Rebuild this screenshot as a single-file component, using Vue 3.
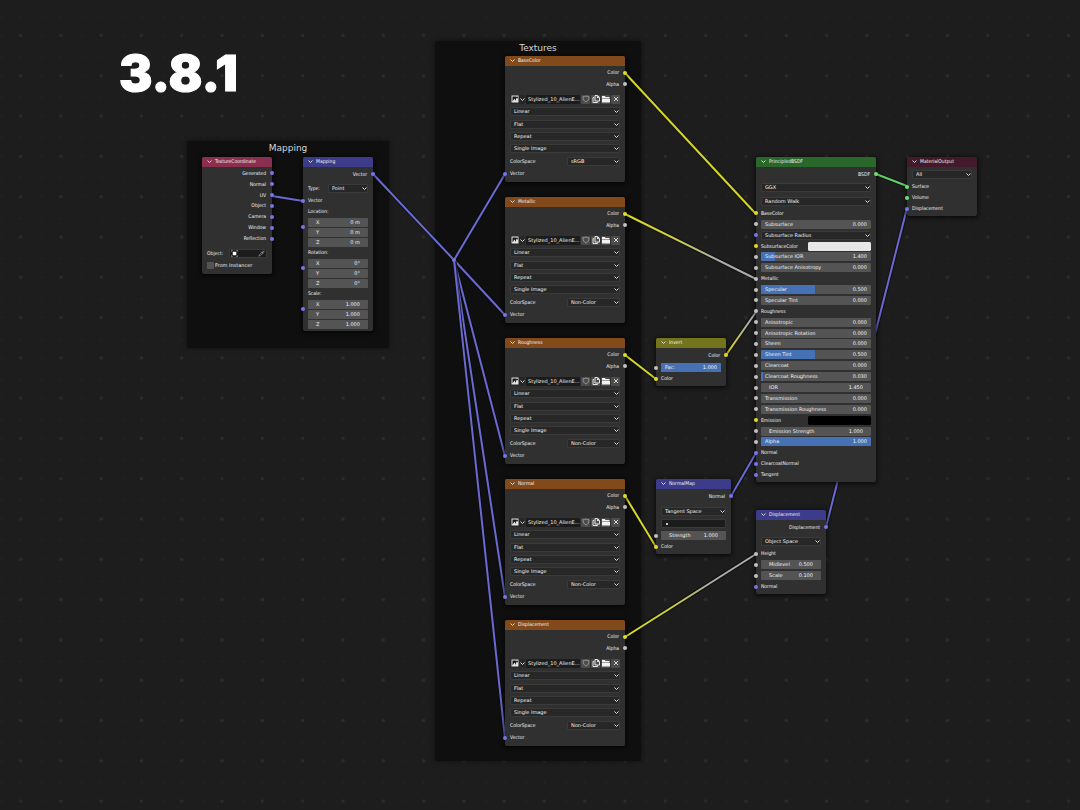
<script setup>
const V = 'vector'
const F = 'float'
const C = 'color'
const S = 'shader'

const out = (label, socket) => ({ type: 'out', label, socket })
const inp = (label, socket) => ({ type: 'in', label, socket })
const num = (label, value, fill = 0, inset = false) => ({ type: 'num', label, value, fill, inset, socket: F })
const sel = (value, label = '', socket = '') => ({ type: 'select', value, label, socket })
const xyz = (label, value) => ({ type: 'xyz', label, value, socket: V })

const textureNode = (title, y, space) => ({
  id: 'tex-' + title, title, tone: 'orange', x: 505, y, w: 120,
  groups: [
    { h: 24, top: true, rows: [out('Color', C), out('Alpha', F)] },
    {
      h: 90, lead: true, rows: [
        { type: 'image', value: 'Stylized_10_AlienE...' },
        sel('Linear'), sel('Flat'), sel('Repeat'), sel('Single Image'),
        sel(space, 'ColorSpace'), inp('Vector', V),
      ],
    },
  ],
})

const frames = [
  { title: 'Mapping', x: 187, y: 141, w: 202, h: 207 },
  { title: 'Textures', x: 435, y: 41, w: 206, h: 720 },
]

const nodes = [
  {
    id: 'coord', title: 'TextureCoordinate', tone: 'red', x: 202, y: 157, w: 70,
    groups: [
      { h: 77, top: true, rows: ['Generated', 'Normal', 'UV', 'Object', 'Camera', 'Window', 'Reflection'].map((l) => out(l, V)) },
      { h: 28, lead: true, rows: [{ type: 'object', label: 'Object:' }, { type: 'check', label: 'From Instancer' }] },
    ],
  },
  {
    id: 'mapping', title: 'Mapping', tone: 'purple', x: 303, y: 157, w: 70,
    groups: [
      { h: 28, rows: [out('Vector', V), { ...sel('Point', 'Type:'), half: true }] },
      { h: 11, rows: [inp('Vector', V)] },
      { h: 41, rows: [xyz('Location:', '0 m')] },
      { h: 41, rows: [xyz('Rotation:', '0°')] },
      { h: 41, rows: [xyz('Scale:', '1.000')] },
    ],
  },
  textureNode('BaseColor', 56, 'sRGB'),
  textureNode('Metallic', 197, 'Non-Color'),
  textureNode('Roughness', 338, 'Non-Color'),
  textureNode('Normal', 479, 'Non-Color'),
  textureNode('Displacement', 620, 'Non-Color'),
  {
    id: 'invert', title: 'Invert', tone: 'olive', x: 656, y: 338, w: 70,
    groups: [
      { h: 14, rows: [out('Color', C)] },
      { h: 22, rows: [num('Fac:', '1.000', 100), inp('Color', C)] },
    ],
  },
  {
    id: 'normalmap', title: 'NormalMap', tone: 'purple', x: 656, y: 479, w: 75,
    groups: [
      { h: 14, rows: [out('Normal', V)] },
      { h: 27, uv: true, rows: [sel('Tangent Space'), { type: 'uvmap', label: 'UV Map' }] },
      { h: 22, rows: [num('Strength', '1.000', 0, true), inp('Color', C)] },
    ],
  },
  {
    id: 'bsdf', title: 'PrincipledBSDF', tone: 'green', x: 756, y: 157, w: 120,
    groups: [
      { h: 14, rows: [out('BSDF', S)] },
      { h: 27, rows: [sel('GGX'), sel('Random Walk')] },
      {
        h: 272, rows: [
          inp('BaseColor', C),
          num('Subsurface', '0.000'),
          sel('Subsurface Radius', '', V),
          { type: 'swatch', label: 'SubsurfaceColor', value: '#e7e7e7', socket: C },
          num('Subsurface IOR', '1.400', 13),
          num('Subsurface Anisotropy', '0.000'),
          inp('Metallic', F),
          num('Specular', '0.500', 49),
          num('Specular Tint', '0.000'),
          inp('Roughness', F),
          num('Anisotropic', '0.000'),
          num('Anisotropic Rotation', '0.000'),
          num('Sheen', '0.000'),
          num('Sheen Tint', '0.500', 49),
          num('Clearcoat', '0.000'),
          num('Clearcoat Roughness', '0.030', 2),
          num('IOR', '1.450', 0, true),
          num('Transmission', '0.000'),
          num('Transmission Roughness', '0.000'),
          { type: 'swatch', label: 'Emission', value: '#000000', socket: C },
          num('Emission Strength', '1.000', 0, true),
          num('Alpha', '1.000', 100),
          inp('Normal', V),
          inp('ClearcoatNormal', V),
          inp('Tangent', V),
        ],
      },
    ],
  },
  {
    id: 'output', title: 'MaterialOutput', tone: 'wine', x: 907, y: 157, w: 70,
    groups: [
      { h: 14, rows: [sel('All')] },
      { h: 33, rows: [inp('Surface', S), inp('Volume', S), inp('Displacement', V)] },
    ],
  },
  {
    id: 'displace', title: 'Displacement', tone: 'purple', x: 756, y: 510, w: 70,
    groups: [
      { h: 28, rows: [out('Displacement', V), sel('Object Space')] },
      { h: 44, rows: [inp('Height', F), num('Midlevel', '0.500', 0, true), num('Scale', '0.100', 0, true), inp('Normal', V)] },
    ],
  },
]

const violet = '#6a6ad2'
const wires = [
  [272, 196, 303, 201, violet],
  [373, 174, 454, 260, violet],
  [454, 260, 505, 174, violet],
  [454, 260, 505, 315, violet],
  [454, 260, 505, 456, violet],
  [454, 260, 505, 597, violet],
  [454, 260, 505, 738, violet],
  [625, 73, 756, 214, '#d6d62a'],
  [625, 214, 756, 279, 'url(#fade-down)'],
  [625, 355, 656, 379, '#d6d62a'],
  [726, 355, 756, 312, 'url(#fade-up)'],
  [625, 496, 656, 547, '#d6d62a'],
  [731, 496, 756, 453, violet],
  [625, 637, 756, 554, 'url(#fade-rise)'],
  [826, 527, 907, 208, violet],
  [876, 174, 907, 186, '#62cf68'],
]
</script>

<template>
  <main class="canvas">
    <svg class="layer" aria-hidden="true">
      <defs>
        <pattern id="grid" width="403" height="403" patternUnits="userSpaceOnUse" patternTransform="translate(.5 15.3) scale(.1)">
          <circle cx="201" cy="201" r="17" fill="#2b2b2b" />
          <circle cx="16" cy="201" r="13" fill="#212121" />
          <circle cx="201" cy="16" r="13" fill="#212121" />
          <circle cx="16" cy="16" r="13" fill="#212121" />
        </pattern>
      </defs>
      <rect width="100%" height="100%" fill="url(#grid)" />
    </svg>

    <h1 class="version">3.8.1</h1>

    <section
      v-for="f in frames" :key="f.title" class="frame"
      :style="{ left: f.x + 'px', top: f.y + 'px', width: f.w + 'px', height: f.h + 'px' }"
    >
      <h2>{{ f.title }}</h2>
    </section>

    <svg class="layer" aria-hidden="true">
      <defs>
        <linearGradient id="fade-down" gradientUnits="userSpaceOnUse" x1="625" y1="214" x2="756" y2="279">
          <stop offset="0" stop-color="#dcdc20" /><stop offset=".35" stop-color="#cfcf3a" /><stop offset=".7" stop-color="#adadad" /><stop offset="1" stop-color="#adadad" />
        </linearGradient>
        <linearGradient id="fade-up" gradientUnits="userSpaceOnUse" x1="726" y1="355" x2="756" y2="312">
          <stop offset="0" stop-color="#dcdc20" /><stop offset=".25" stop-color="#cfcf3a" /><stop offset=".7" stop-color="#adadad" /><stop offset="1" stop-color="#adadad" />
        </linearGradient>
        <linearGradient id="fade-rise" gradientUnits="userSpaceOnUse" x1="625" y1="637" x2="756" y2="554">
          <stop offset="0" stop-color="#dcdc20" /><stop offset=".35" stop-color="#cfcf3a" /><stop offset=".65" stop-color="#adadad" /><stop offset="1" stop-color="#adadad" />
        </linearGradient>
      </defs>
      <g v-for="(w, i) in wires" :key="i" fill="none">
        <path :d="`M${w[0]} ${w[1]}L${w[2]} ${w[3]}`" stroke="#0c0c0c" stroke-opacity=".7" stroke-width="4" />
        <path :d="`M${w[0]} ${w[1]}L${w[2]} ${w[3]}`" :stroke="w[4]" stroke-width="2" />
      </g>
      <circle cx="454" cy="260" r="2" fill="#7676ea" />
    </svg>

    <article
      v-for="n in nodes" :key="n.id" class="node"
      :style="{ left: n.x + 'px', top: n.y + 'px', width: n.w + 'px' }"
    >
      <header :class="n.tone">
        <svg class="fold" viewBox="0 0 10 6"><path d="M1 1l4 4 4-4" /></svg>
        <h3>{{ n.title }}</h3>
      </header>

      <div
        v-for="(g, gi) in n.groups" :key="gi" class="group" :class="{ lead: g.lead, uv: g.uv, top: g.top }"
        :style="{ height: g.h + 'px' }"
      >
        <div v-for="(r, ri) in g.rows" :key="ri" class="row" :class="r.type">
          <i v-if="r.socket" class="socket" :class="r.socket"></i>

          <span v-if="r.type === 'out' || r.type === 'in'" class="small">{{ r.label }}</span>

          <template v-else-if="r.type === 'select'">
            <label v-if="r.label" class="small" :for="`${n.id}-${gi}-${ri}`">{{ r.label }}</label>
            <div class="pick" :class="{ half: r.label, wide: r.half }">
              <select :id="`${n.id}-${gi}-${ri}`" :aria-label="r.label || r.value"><option>{{ r.value }}</option></select>
              <svg viewBox="0 0 10 6"><path d="M1 1l4 4 4-4" /></svg>
            </div>
          </template>

          <div v-else-if="r.type === 'num'" class="field" :class="{ inset: r.inset }">
            <b v-if="r.fill" class="fill" :style="{ width: r.fill + '%' }"></b>
            <label :for="`${n.id}-${gi}-${ri}`">{{ r.label }}</label>
            <input :id="`${n.id}-${gi}-${ri}`" type="text" :value="r.value">
          </div>

          <template v-else-if="r.type === 'xyz'">
            <span class="small caption">{{ r.label }}</span>
            <div v-for="a in ['X', 'Y', 'Z']" :key="a" class="field inset axis">
              <label :for="`${n.id}-${gi}-${a}`">{{ a }}</label>
              <input :id="`${n.id}-${gi}-${a}`" type="text" :value="r.value">
            </div>
          </template>

          <template v-else-if="r.type === 'swatch'">
            <label class="small" :for="`${n.id}-${gi}-${ri}`">{{ r.label }}</label>
            <input :id="`${n.id}-${gi}-${ri}`" type="color" :value="r.value">
          </template>

          <template v-else-if="r.type === 'image'">
            <button class="browse" type="button" aria-label="Browse image">
              <svg class="pic" viewBox="0 0 16 16"><path d="M1 1h14v14H1z" fill="#e4e4e4" /><path d="M3 3h7v9l-3-5-4 6z" fill="#191919" /><circle cx="12" cy="5" r="2" fill="#191919" /></svg>
              <svg class="chev" viewBox="0 0 10 6"><path d="M1 1l4 4 4-4" /></svg>
            </button>
            <input type="text" class="name" aria-label="Image name" :value="r.value">
            <button type="button" aria-label="Fake user">
              <svg viewBox="0 0 16 16"><path d="M8 2c2 1 4 1.500 6 1.500C14 9 12 12 8 14 4 12 2 9 2 3.500 4 3.500 6 3 8 2z" fill="none" stroke="#a9a9a9" stroke-width="1.500" /></svg>
            </button>
            <button type="button" aria-label="Duplicate">
              <svg viewBox="0 0 16 16"><path d="M6 1h5l4 4v7H6zM4 5H2v10h9v-2" fill="none" stroke="#e4e4e4" stroke-width="2" /><path d="M10 1v5h5" fill="#e4e4e4" /></svg>
            </button>
            <button type="button" aria-label="Open image">
              <svg viewBox="0 0 16 16"><path d="M0 2h6l1 2h8v3H0zM0 8h16v7H0z" fill="#f2f2f2" /></svg>
            </button>
            <button type="button" aria-label="Unlink">
              <svg viewBox="0 0 16 16"><path d="M4 4l8 8M12 4l-8 8" stroke="#d6d6d6" stroke-width="2" /></svg>
            </button>
          </template>

          <template v-else-if="r.type === 'object'">
            <span class="small">{{ r.label }}</span>
            <button class="slot" type="button" aria-label="Object">
              <svg viewBox="0 0 16 16"><path d="M4 4h8v8H4z" fill="#fff" /><path d="M1 4V1h3M12 1h3v3M15 12v3h-3M4 15H1v-3" fill="none" stroke="#8a8a8a" stroke-width="2" /></svg>
              <svg viewBox="0 0 16 16"><path d="M2 14l1-3 6-6 2 2-6 6z" fill="none" stroke="#a0a0a0" stroke-width="1.500" /><path d="M8 4l4 4M10 5l3-3 1 1-3 3z" stroke="#a0a0a0" stroke-width="2" /></svg>
            </button>
          </template>

          <label v-else-if="r.type === 'check'" class="tick"><input type="checkbox"><span>{{ r.label }}</span></label>

          <button v-else class="slot" type="button" :aria-label="r.label"><i class="dot"></i></button>
        </div>
      </div>
    </article>
  </main>
</template>

<style>
body {
  background: #1d1d1d;
}
</style>

<style scoped>
.canvas {
  position: relative;
  min-height: 100vh;
  overflow: hidden;
  background: #1d1d1d;
  color: #f2f2f2;
  font: 5px/9px "DejaVu Sans", sans-serif;
}
.canvas *,
.canvas {
  box-sizing: border-box;
}
.layer {
  position: absolute;
  inset: 0;
  width: 100%;
  height: 100%;
}
.version {
  position: absolute;
  left: 119px;
  top: 44px;
  margin: 0;
  color: #fff;
  font: 900 50px/58px "Inter Black", Inter, sans-serif;
  -webkit-text-stroke: 1px #fff;
}
.frame {
  position: absolute;
  background: #0f0f0f;
  border-radius: 2px;
  box-shadow: 0 0 5px rgba(0, 0, 0, 0.5);
}
.frame h2 {
  margin: 1px 0 0;
  text-align: center;
  color: #d6d6d6;
  font-size: 9px;
  font-weight: 400;
  line-height: 12px;
}
.node {
  position: absolute;
  padding-bottom: 2px;
  background: #303030;
  border-radius: 2px;
  box-shadow: 0 1px 4px 1px rgba(0, 0, 0, 0.65);
}
header {
  display: flex;
  align-items: center;
  gap: 3px;
  height: 10px;
  padding: 0 5px 1px;
  border-radius: 2px 2px 0 0;
}
header h3 {
  margin: 0;
  font: 5px/9px "DejaVu Sans Condensed", "DejaVu Sans", sans-serif;
}
.red { background: #8a2f4f; }
.purple { background: #3c3c8a; }
.orange { background: #82491b; }
.green { background: #2a672b; }
.olive { background: #74741c; }
.wine { background: #421a29; }
.fold {
  width: 5px;
  height: 3px;
}
.fold path,
.pick path,
.chev path {
  fill: none;
  stroke: #dcdcdc;
  stroke-width: 2;
}
.group {
  display: grid;
  grid-template-columns: minmax(0, 1fr);
  grid-auto-rows: 1fr;
  padding: 0 5px;
}
.group.top {
  padding-top: 1px;
}
.group.lead {
  padding-top: 3px;
}
.group.uv {
  padding-top: 2px;
}
.row {
  position: relative;
  display: flex;
  align-items: center;
  min-height: 0;
}
.row.out {
  justify-content: flex-end;
}
.small {
  font-family: "DejaVu Sans Condensed", "DejaVu Sans", sans-serif;
  white-space: nowrap;
}
.socket {
  position: absolute;
  left: -7px;
  top: calc(50% - 2px);
  width: 4px;
  height: 4px;
  border-radius: 50%;
  z-index: 1;
}
.out .socket {
  left: auto;
  right: -7px;
}
.xyz .socket {
  top: 19px;
}
.vector { background: #7676ea; }
.float { background: #c2c2c2; }
.color { background: #dede24; }
.shader { background: #6ce46e; }

select,
input,
button {
  margin: 0;
  padding: 0;
  border: 0;
  outline: 0;
  color: inherit;
  background: none;
  font: inherit;
  border-radius: 1px;
}
.row.out .small {
  padding-right: 1px;
}
.pick {
  position: relative;
  flex: 1;
  height: 9px;
}
.pick.half {
  flex: none;
  width: 53px;
  margin-left: auto;
}
.pick.wide {
  width: 40px;
}
.pick select {
  display: block;
  appearance: none;
  width: 100%;
  height: 9px;
  padding: 0 3px;
  line-height: 7px;
  background: #272727;
  border: 1px solid #3a3a3a;
}
.pick svg {
  position: absolute;
  right: 1px;
  top: 3px;
  width: 5px;
  height: 3px;
}
.field {
  position: relative;
  display: flex;
  flex: 1;
  justify-content: space-between;
  align-items: center;
  min-width: 0;
  height: 9px;
  padding: 0 4px;
  background: #545454;
  border-radius: 1px;
  overflow: hidden;
}
.field.inset {
  padding: 0 8px;
}
.field label,
.field input {
  position: relative;
  white-space: nowrap;
}
.field input {
  width: 20px;
  height: 9px;
  text-align: right;
}
.fill {
  position: absolute;
  left: 0;
  top: 0;
  bottom: 0;
  background: #4672b5;
}
.row.xyz {
  display: grid;
  grid-template-rows: 11px repeat(3, 9px);
  row-gap: 1px;
  align-content: start;
}
.row.xyz .caption {
  line-height: 11px;
}
.row.swatch {
  justify-content: space-between;
}
input[type="color"] {
  appearance: none;
  width: 63px;
  height: 9px;
}
input[type="color"]::-webkit-color-swatch-wrapper {
  padding: 0;
}
input[type="color"]::-webkit-color-swatch {
  border: 0;
  border-radius: 1px;
}
.row.image {
  gap: 1px;
}
.image button {
  display: flex;
  align-items: center;
  justify-content: center;
  flex: none;
  width: 9px;
  height: 9px;
  background: #4c4c4c;
}
.image button svg {
  width: 8px;
  height: 8px;
}
.image .browse {
  width: 15px;
  gap: 1px;
  background: #272727;
}
.image .browse .chev {
  width: 5px;
  height: 3px;
}
.name {
  flex: 1;
  min-width: 0;
  height: 9px;
  padding: 0 0 0 2px;
  background: #1c1c1c;
}
.slot {
  display: flex;
  align-items: center;
  flex: 1;
  height: 9px;
  padding: 0 4px;
  background: #1c1c1c;
  border: 1px solid #3a3a3a;
}
.object .slot {
  flex: none;
  justify-content: space-between;
  width: 38px;
  margin-left: auto;
  padding: 0 1px;
}
.slot svg {
  width: 7px;
  height: 7px;
}
.dot {
  width: 2px;
  height: 2px;
  border-radius: 50%;
  background: #fff;
}
.tick {
  display: flex;
  align-items: center;
  gap: 1px;
}
.tick input {
  appearance: none;
  width: 7px;
  height: 7px;
  background: #545454;
}
</style>
